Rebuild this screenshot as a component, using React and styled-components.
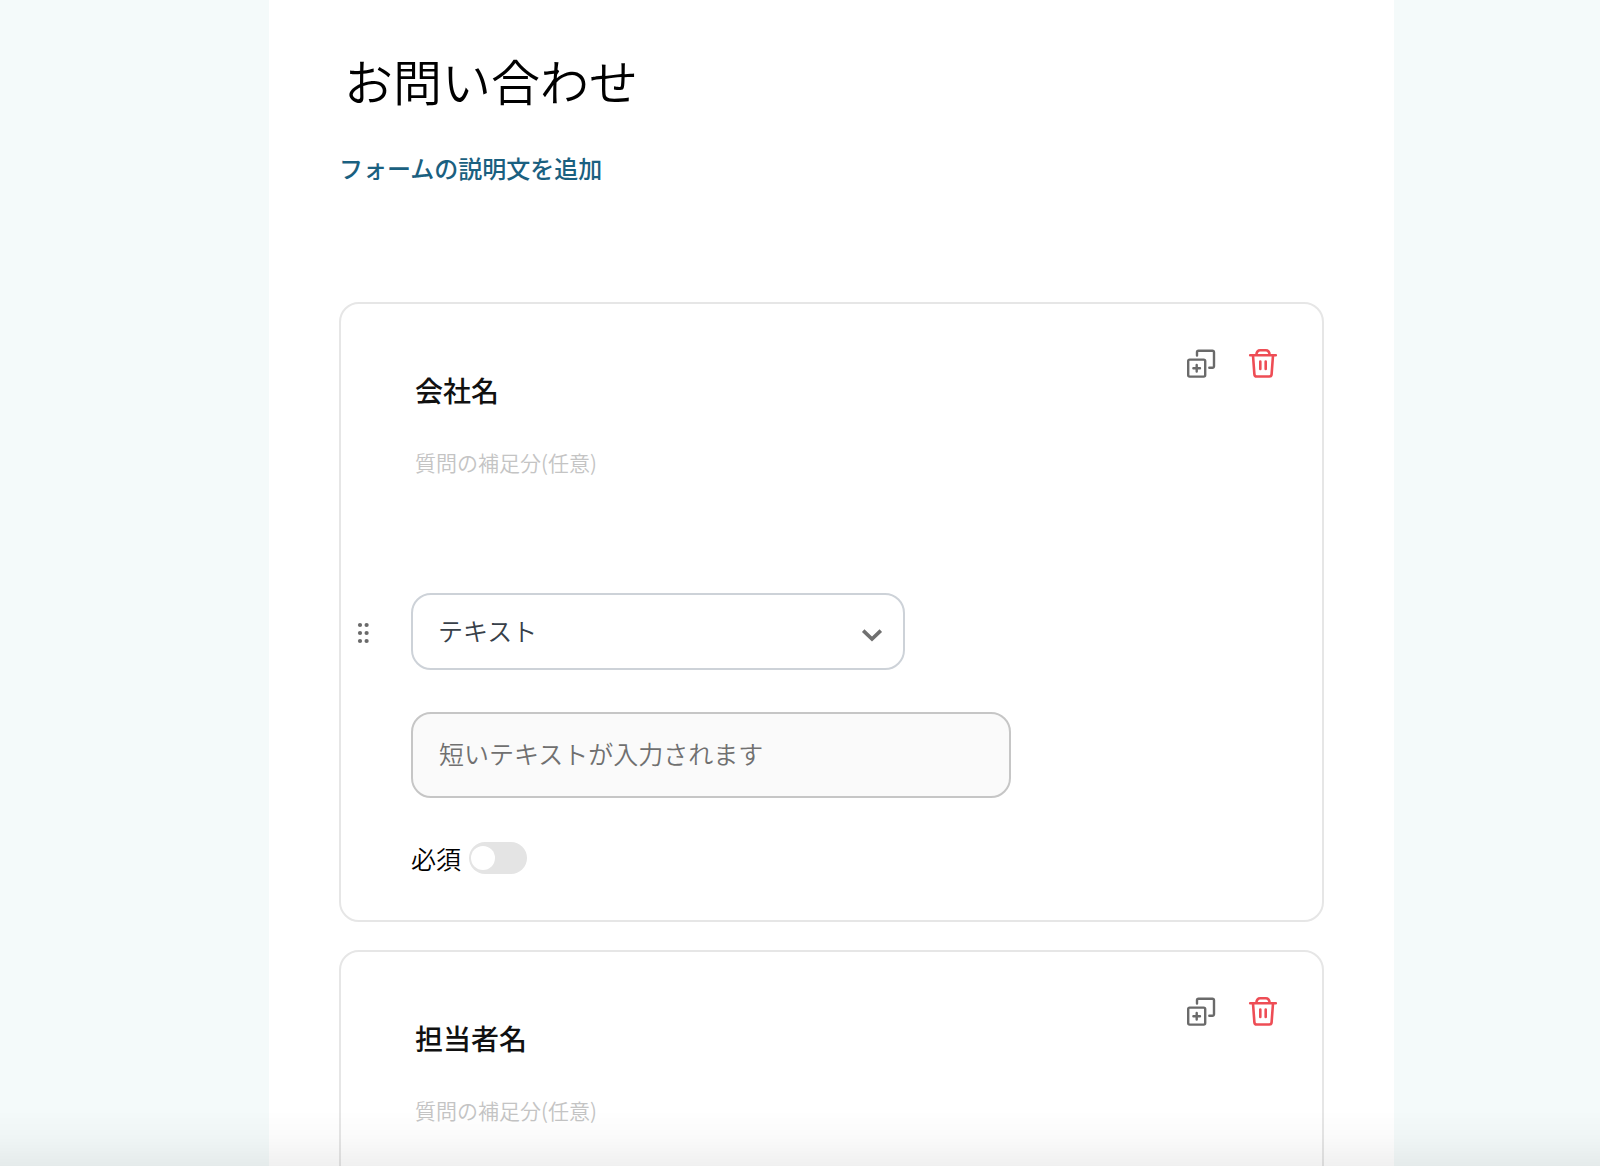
import React from "react";
import styled, { createGlobalStyle } from "styled-components";

const GlobalStyle = createGlobalStyle`
  *, *::before, *::after { box-sizing: border-box; }
  body {
    margin: 0;
    background: #f4fafa;
    color: #111;
    font-family: "Noto Sans CJK JP", sans-serif;
    font-weight: 350;
  }
  input, select, button { font-family: inherit; font-weight: inherit; margin: 0; }
`;

const Page = styled.div`
  height: 100vh;
  overflow: hidden;
  padding: 0 206px 0 269px;
`;

const Sheet = styled.main`
  min-height: 100%;
  padding: 43px 70px 0;
  background: #fff;
`;

const BareInput = styled.input`
  display: block;
  width: 100%;
  padding: 0;
  border: 0;
  outline: 0;
  background: transparent;
  color: #111;
`;

const FormTitle = styled(BareInput)`
  height: 72px;
  padding-left: 5px;
  font-size: 49px;
  color: #000;
`;

const AddDescription = styled.button`
  display: block;
  height: 36px;
  margin: 35px 0 116px;
  padding: 0;
  border: 0;
  background: none;
  color: #1a6080;
  font-size: 24px;
  font-weight: 500;
  line-height: 36px;
  cursor: pointer;
`;

const CardList = styled.div`
  display: grid;
  gap: 28px;
`;

const Card = styled.section`
  min-height: 620px;
  padding: 44px 44px 44px 0;
  border: 2px solid #e6e6e6;
  border-radius: 20px;
  background: #fff;
`;

const CardHead = styled.header`
  display: flex;
  align-items: flex-start;
  padding-left: 74px;
`;

const Prompt = styled.div`
  display: grid;
  flex: 1;
  gap: 36px;
  padding-top: 22px;
`;

const QuestionInput = styled(BareInput)`
  height: 40px;
  font-size: 28px;
  font-weight: 500;
`;

const NoteInput = styled(BareInput)`
  height: 32px;
  font-size: 21px;
  &::placeholder { color: #c4c4c4; opacity: 1; }
`;

const Actions = styled.div`
  display: flex;
  gap: 32px;
`;

const IconButton = styled.button`
  display: block;
  width: 30px;
  height: 30px;
  padding: 0;
  border: 0;
  background: none;
  color: ${(p) => (p.$danger ? "#ee4d55" : "#6a6a6a")};
  cursor: pointer;
  svg { display: block; }
`;

const Answer = styled.div`
  display: grid;
  grid-template-columns: 70px 1fr;
  align-items: center;
  row-gap: 42px;
  margin-top: 115px;
`;

const Handle = styled.button`
  justify-self: start;
  display: block;
  width: 20px;
  height: 28px;
  margin-left: 12px;
  padding: 0;
  border: 0;
  background: none;
  cursor: grab;
  svg { display: block; }
`;

const SelectWrap = styled.div`
  position: relative;
  width: 494px;
  svg {
    position: absolute;
    right: 22px;
    top: 30px;
    pointer-events: none;
  }
`;

const TypeSelect = styled.select`
  display: block;
  width: 100%;
  height: 77px;
  padding: 0 60px 4px 25px;
  appearance: none;
  border: 2px solid #cdd2d8;
  border-radius: 20px;
  background: #fff;
  color: #374049;
  font-size: 25px;
`;

const AnswerInput = styled.input`
  grid-column: 2;
  width: 600px;
  height: 86px;
  padding: 0 26px 4px;
  border: 2px solid #c6c6c6;
  border-radius: 20px;
  background: #fafafa;
  font-size: 25px;
  &::placeholder { color: #707070; opacity: 1; }
`;

const RequiredLabel = styled.label`
  grid-column: 2;
  display: flex;
  align-items: center;
  gap: 8px;
  color: #000;
  font-size: 25px;
  line-height: 36px;
`;

const Switch = styled.input`
  appearance: none;
  display: flex;
  align-items: center;
  width: 58px;
  height: 32px;
  padding: 0 2px;
  border-radius: 16px;
  background: #e4e4e4;
  cursor: pointer;
  &::before {
    content: "";
    width: 24px;
    height: 24px;
    border-radius: 50%;
    background: #fff;
  }
  &:checked { justify-content: flex-end; background: #1a6080; }
`;

const BottomShade = styled.div`
  position: fixed;
  inset: auto 0 0 0;
  height: 56px;
  background: linear-gradient(to bottom, rgba(0, 0, 0, 0), rgba(0, 0, 0, 0.02) 50%, rgba(0, 0, 0, 0.06));
  pointer-events: none;
`;

const DuplicateIcon = () => (
  <svg width="30" height="30" viewBox="0 0 30 30" fill="none" stroke="currentColor" strokeWidth="2.4" strokeLinecap="round" strokeLinejoin="round">
    <rect x="2.2" y="11.6" width="17" height="17" rx="1.5" />
    <path d="M11 7.6V4.2A1.5 1.5 0 0 1 12.500 2.700H26.500A1.500 1.500 0 0 1 28 4.200V18.300A1.500 1.500 0 0 1 26.500 19.800H23.300" />
    <path d="M10.700 16.900V23.500M7.400 20.200H14" />
  </svg>
);

const TrashIcon = () => (
  <svg width="30" height="30" viewBox="0 0 30 30" fill="none" stroke="currentColor" strokeWidth="2.6" strokeLinecap="round" strokeLinejoin="round">
    <path d="M2.200 7.200H27.800M8.300 7C8.600 3.800 9.800 2.200 12.200 2.200H17.800C20.200 2.200 21.400 3.800 21.700 7" />
    <path d="M5 7.500L6.400 26.300A2.400 2.400 0 0 0 8.800 28.500H21.200A2.400 2.400 0 0 0 23.600 26.300L25 7.500" />
    <path d="M12.300 13.500V21M17.700 13.500V21" />
  </svg>
);

const DotsIcon = () => (
  <svg width="20" height="28" viewBox="0 0 20 28" fill="#6a6a6a">
    {[7, 15, 23].map((y) => (
      <React.Fragment key={y}>
        <circle cx="7" cy={y} r="2.1" />
        <circle cx="13.600" cy={y} r="2.1" />
      </React.Fragment>
    ))}
  </svg>
);

const ChevronIcon = () => (
  <svg width="22" height="20" viewBox="0 0 22 20" fill="none" stroke="#707070" strokeWidth="3.6">
    <path d="M2.200 7.600L11 16L19.800 7.600" />
  </svg>
);

function Question({ name, children }) {
  return (
    <Card>
      <CardHead>
        <Prompt>
          <QuestionInput aria-label="質問" defaultValue={name} />
          <NoteInput aria-label="質問の補足分" placeholder="質問の補足分(任意)" />
        </Prompt>
        <Actions>
          <IconButton type="button" aria-label="複製"><DuplicateIcon /></IconButton>
          <IconButton type="button" aria-label="削除" $danger><TrashIcon /></IconButton>
        </Actions>
      </CardHead>
      {children}
    </Card>
  );
}

export default function App() {
  return (
    <>
      <GlobalStyle />
      <Page>
        <Sheet>
          <FormTitle aria-label="フォーム名" defaultValue="お問い合わせ" />
          <AddDescription type="button">フォームの説明文を追加</AddDescription>
          <CardList>
            <Question name="会社名">
              <Answer>
                <Handle type="button" aria-label="並べ替え"><DotsIcon /></Handle>
                <SelectWrap>
                  <TypeSelect aria-label="回答形式">
                    <option>テキスト</option>
                  </TypeSelect>
                  <ChevronIcon />
                </SelectWrap>
                <AnswerInput aria-label="回答" placeholder="短いテキストが入力されます" readOnly />
                <RequiredLabel>
                  必須
                  <Switch type="checkbox" />
                </RequiredLabel>
              </Answer>
            </Question>
            <Question name="担当者名" />
          </CardList>
        </Sheet>
      </Page>
      <BottomShade />
    </>
  );
}
